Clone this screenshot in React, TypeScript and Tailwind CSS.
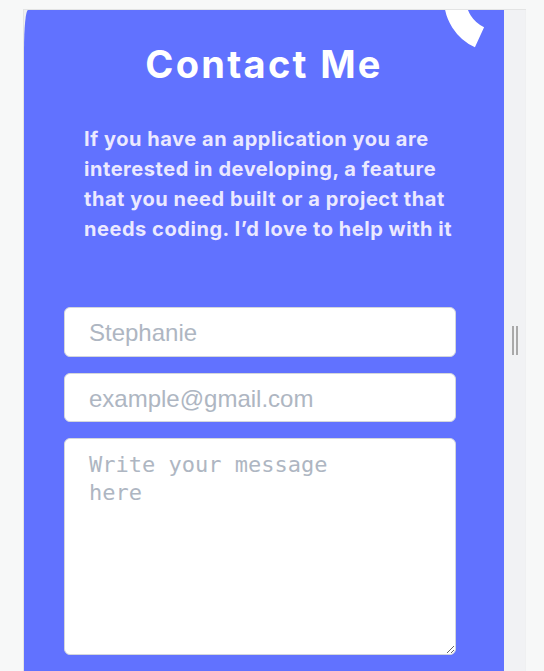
import React from 'react';

const introLines = [
  'If you have an application you are',
  'interested in developing, a feature',
  'that you need built or a project that',
  'needs coding. I\u2019d love to help with it',
];

const CornerArc = () => (
  <svg
    className="pointer-events-none absolute left-0 top-0"
    width={480}
    height={60}
    viewBox="0 0 480 60"
  >
    <path d="M 431 -11 A 42 42 0 0 0 455.5 27.2" fill="none" stroke="#ffffff" strokeWidth={22} />
  </svg>
);

const ContactForm = () => (
  <form className="ml-[40px] mt-[63px] flex w-[392px] flex-col">
    <input
      type="text"
      placeholder="Stephanie"
      className="h-[50px] w-full rounded-md border border-[#d3d6dc] bg-white px-6 pt-[2px] font-['Liberation_Sans',Arial,sans-serif] text-[24px] text-gray-700 outline-none placeholder:text-[#aeb6c2]"
    />
    <input
      type="email"
      placeholder="example@gmail.com"
      className="mt-4 h-[49px] w-full rounded-md border border-[#d3d6dc] bg-white px-6 pt-[2px] font-['Liberation_Sans',Arial,sans-serif] text-[24px] text-gray-700 outline-none placeholder:text-[#aeb6c2]"
    />
    <textarea
      placeholder={'Write your message\nhere'}
      className="mt-4 h-[217px] w-full rounded-md border border-[#d3d6dc] bg-white px-6 pt-[12px] font-['DejaVu_Sans_Mono',monospace] text-[22px] leading-[28px] text-gray-700 outline-none placeholder:text-[#aeb6c2]"
    />
  </form>
);

export default function App() {
  return (
    <div className="min-h-screen bg-[#f7f8f8] pl-[23px] pt-[9px]">
      <div className="flex w-[503px] border-l border-t border-[#e3e4e4] bg-[#eff0f1]">
        <section className="relative w-[480px] overflow-hidden rounded-tl-[4px_40px] bg-[#6172ff] pb-12">
          <CornerArc />
          <h1 className="mt-[30px] text-center font-['Inter',sans-serif] text-[38px] font-bold leading-[48px] tracking-[2.3px] text-white">
            Contact Me
          </h1>
          <p className="mt-[36px] px-[60px] font-['Inter',sans-serif] text-[20px] font-bold leading-[30px] tracking-[0.55px] text-[#ebe9ff]">
            {introLines.map((line) => (
              <span key={line} className="block whitespace-nowrap">
                {line}
              </span>
            ))}
          </p>
          <ContactForm />
        </section>
        <div className="flex w-[21px] gap-[2px] bg-[#f1f2f4] pl-2 pt-[316px]">
          <span className="h-[29px] w-[2px] bg-[#a9a9a9]" />
          <span className="h-[29px] w-[2px] bg-[#a9a9a9]" />
        </div>
      </div>
    </div>
  );
}
